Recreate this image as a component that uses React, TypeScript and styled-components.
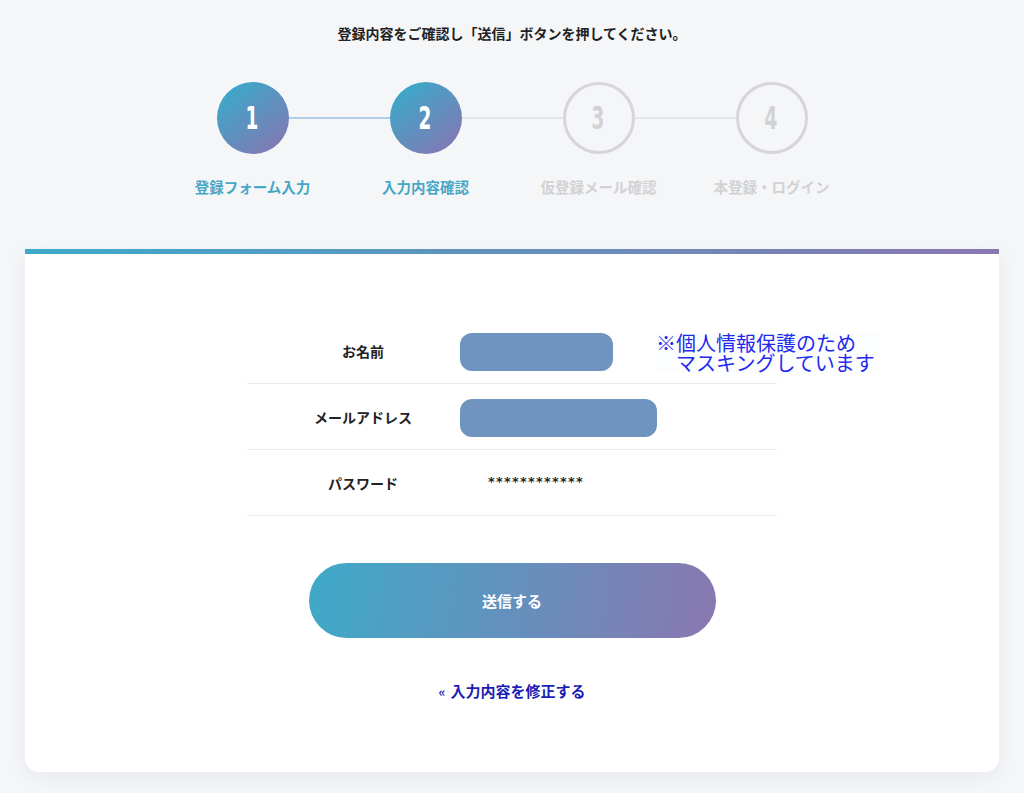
import styled, { createGlobalStyle } from "styled-components";

const GlobalStyle = createGlobalStyle`
  body {
    margin: 0;
    background: #f5f6f8;
    font-family: "Noto Sans CJK JP", "Noto Sans", sans-serif;
    color: #222;
  }
`;

const steps = ["登録フォーム入力", "入力内容確認", "仮登録メール確認", "本登録・ログイン"];
const currentStep = 2;

const rows = [
  { label: "お名前", mask: 153 },
  { label: "メールアドレス", mask: 197 },
  { label: "パスワード", value: "************" },
];

export default function App() {
  return (
    <>
      <GlobalStyle />
      <StyledPage>
        <StyledLead>登録内容をご確認し「送信」ボタンを押してください。</StyledLead>
        <StyledSteps>
          {steps.map((label, i) => (
            <StyledStep
              key={label}
              $lineDone={i + 1 < currentStep}
              $last={i === steps.length - 1}
            >
              <StyledCircle $done={i < currentStep}>
                <StyledNumber>{i + 1}</StyledNumber>
              </StyledCircle>
              <StyledStepLabel $done={i < currentStep}>{label}</StyledStepLabel>
            </StyledStep>
          ))}
        </StyledSteps>

        <StyledCard>
          <StyledTable>
            {rows.map((row, i) => (
              <StyledRow key={row.label}>
                <StyledLabel>{row.label}</StyledLabel>
                <StyledValue>
                  {row.mask ? (
                    <StyledMask style={{ width: row.mask }} />
                  ) : (
                    <StyledStars>{row.value}</StyledStars>
                  )}
                </StyledValue>
                {i === 0 && (
                  <StyledNote>
                    <span>※個人情報保護のため</span>
                    <StyledNoteIndent>マスキングしています</StyledNoteIndent>
                  </StyledNote>
                )}
              </StyledRow>
            ))}
          </StyledTable>

          <StyledSubmit type="button">送信する</StyledSubmit>
          <StyledBackLink href="#">
            <StyledChevron>«</StyledChevron>入力内容を修正する
          </StyledBackLink>
        </StyledCard>
        <StyledBottomSpace />
      </StyledPage>
    </>
  );
}

const StyledPage = styled.div`
  padding-top: 23px;
  display: flex;
  flex-direction: column;
  align-items: center;
`;

const StyledLead = styled.p`
  margin: 0;
  font-size: 14px;
  line-height: 20px;
  font-weight: 700;
  color: #222;
`;

const StyledSteps = styled.div`
  display: flex;
  margin-top: 39px;
`;

const StyledStep = styled.div<{ $lineDone: boolean; $last: boolean }>`
  position: relative;
  width: 173px;
  display: flex;
  flex-direction: column;
  align-items: center;

  &::after {
    content: "";
    display: ${({ $last }) => ($last ? "none" : "block")};
    position: absolute;
    top: 35px;
    left: 86px;
    width: 173px;
    height: 2px;
    background: ${({ $lineDone }) => ($lineDone ? "#b3cde6" : "#e6e7ea")};
    z-index: 0;
  }
`;

const StyledCircle = styled.div<{ $done: boolean }>`
  position: relative;
  z-index: 1;
  box-sizing: border-box;
  width: 72px;
  height: 72px;
  border-radius: 50%;
  display: flex;
  align-items: center;
  justify-content: center;
  background: ${({ $done }) =>
    $done ? "linear-gradient(140deg, #3aa9c9 10%, #8776b2 95%)" : "#f5f6f8"};
  border: ${({ $done }) => ($done ? "none" : "3px solid #d6d6d8")};
  color: ${({ $done }) => ($done ? "#fff" : "#d2d2d4")};
`;

const StyledNumber = styled.span`
  font-family: "DejaVu Sans Condensed", "DejaVu Sans", sans-serif;
  font-weight: 700;
  font-size: 32px;
  line-height: 1;
  display: inline-block;
  transform: scaleX(0.64);
`;

const StyledStepLabel = styled.div<{ $done: boolean }>`
  margin-top: 23px;
  font-size: 14.5px;
  line-height: 20px;
  font-weight: 700;
  color: ${({ $done }) => ($done ? "#46a7c6" : "#d2d2d4")};
`;

const StyledCard = styled.div`
  align-self: stretch;
  margin: 52px 25px 0;
  background: #fff;
  border-top: 5px solid transparent;
  border-image: linear-gradient(90deg, #3caac9, #8a77b0) 1;
  border-image-width: 5px 0 0 0;
  border-radius: 0 0 14px 14px;
  box-shadow: 0 6px 20px rgba(30, 40, 70, 0.06);
  padding: 64px 0 70px;
  display: flex;
  flex-direction: column;
  align-items: center;
`;

const StyledTable = styled.div`
  width: 530px;
  display: flex;
  flex-direction: column;
`;

const StyledRow = styled.div`
  position: relative;
  display: grid;
  grid-template-columns: 232px 1fr;
  align-items: center;
  height: 65px;
  border-bottom: 1px solid #ebebeb;
`;

const StyledLabel = styled.div`
  text-align: center;
  font-size: 14px;
  font-weight: 700;
  color: #222;
`;

const StyledValue = styled.div`
  display: flex;
  align-items: center;
  margin-left: -19px;
`;

const StyledMask = styled.div`
  height: 38px;
  margin-top: 2px;
  border-radius: 12px;
  background: #7094c0;
`;

const StyledStars = styled.span`
  margin-left: 28px;
  margin-top: -2px;
  font-family: "DejaVu Sans", sans-serif;
  font-size: 13px;
  font-weight: 700;
  letter-spacing: 1.2px;
  color: #222;
`;

const StyledNote = styled.div`
  position: absolute;
  left: 409px;
  top: 15px;
  display: flex;
  flex-direction: column;
  white-space: nowrap;
  background: #fcfdfe;
  padding: 0 4px 0 0;
  font-size: 20px;
  line-height: 20px;
  font-weight: 400;
  color: #1f2af0;
`;

const StyledNoteIndent = styled.span`
  padding-left: 20px;
`;

const StyledSubmit = styled.button`
  margin-top: 47px;
  width: 407px;
  height: 75px;
  border: none;
  border-radius: 38px;
  background: linear-gradient(100deg, #3eaac8, #8a77b1);
  color: #fff;
  font-family: "Noto Sans CJK JP", "Noto Sans", sans-serif;
  font-size: 15px;
  font-weight: 700;
  cursor: pointer;
`;

const StyledBackLink = styled.a`
  margin-top: 43px;
  font-size: 15px;
  line-height: 20px;
  font-weight: 700;
  color: #1b1fb5;
  text-decoration: none;
`;

const StyledChevron = styled.span`
  font-size: 13px;
  margin-right: 5px;
`;

const StyledBottomSpace = styled.div`
  height: 22px;
`;
